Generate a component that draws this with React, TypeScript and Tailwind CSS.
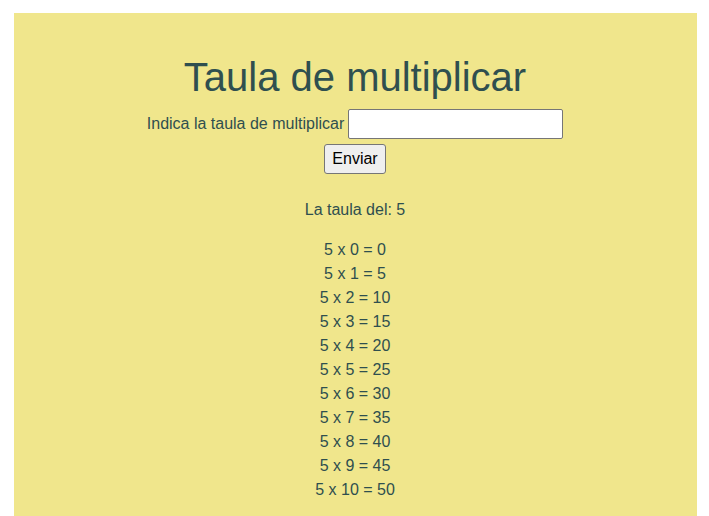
import React, { useState } from 'react';

const App = () => {
  const [taula, setTaula] = useState('');
  const numero = 5;
  const files = Array.from({ length: 11 }, (_, i) => i);

  return (
    <div className="min-h-[516px] bg-white pt-[13px] px-[12px] font-['Liberation_Sans',Arial,sans-serif]">
      <div className="ml-[2px] w-[683px] min-h-[503px] bg-[#f0e68c] text-[#2f4f4f] flex flex-col items-center pt-[41px] pr-[1px]">
        {/* Títol */}
        <h1 className="text-[40px] leading-[46px]">Taula de multiplicar</h1>

        {/* Formulari */}
        <form
          className="flex flex-col items-center mt-[9px]"
          onSubmit={(e) => e.preventDefault()}
        >
          <div className="flex items-center gap-[4px]">
            <label className="text-base">Indica la taula de multiplicar</label>
            <input
              type="text"
              value={taula}
              onChange={(e) => setTaula(e.target.value)}
              className="w-[215px] h-[30px] bg-white border border-[#767676] rounded-[2px] px-1 text-black"
            />
          </div>
          <button
            type="submit"
            className="mt-[5px] w-[62px] h-[30px] bg-[#efefef] border border-[#767676] rounded-[3px] text-black text-base"
          >
            Enviar
          </button>
        </form>

        {/* Resultat */}
        <p className="mt-[24px] text-base leading-6">La taula del: {numero}</p>
        <div className="mt-[16px] flex flex-col items-center text-base leading-6">
          {files.map((i) => (
            <div key={i}>
              {numero} x {i} = {numero * i}
            </div>
          ))}
        </div>
      </div>
    </div>
  );
};

export default App;
